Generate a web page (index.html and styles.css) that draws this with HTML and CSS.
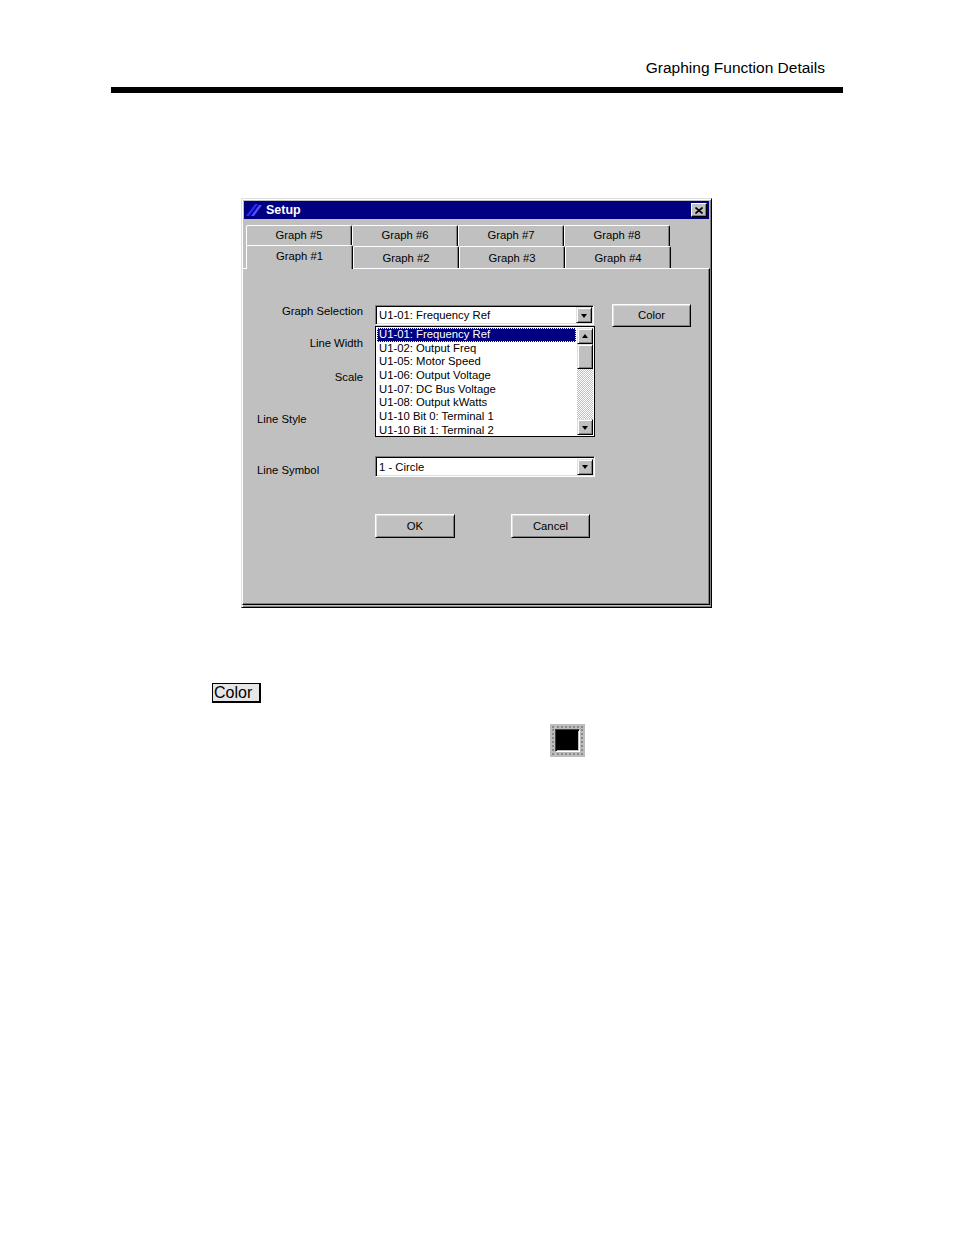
FILE: index.html
```html
<!DOCTYPE html>
<html>
<head>
<meta charset="utf-8">
<link rel="stylesheet" href="styles.css">
</head>
<body>
<div class="page">
  <div class="header">Graphing Function Details</div>
  <div class="rule"></div>

  <div class="dialog">
    <div class="titlebar">
      <svg class="ticon" width="16" height="14" viewBox="0 0 16 14">
        <polygon points="0,13 3,13 12,1 9,1" fill="#2a2aff"/>
        <polygon points="5,13 8,13 16,2 13,2" fill="#4f4fff"/>
      </svg>
      <span class="ttext">Setup</span>
      <span class="close">
        <svg width="8" height="7" viewBox="0 0 8 7"><path d="M0.5 0.5 L7.5 6.5 M7.5 0.5 L0.5 6.5" stroke="#000" stroke-width="1.6"/></svg>
      </span>
    </div>

    <div class="tabs">
      <div class="tabrow back">
        <div class="tab">Graph #5</div>
        <div class="tab">Graph #6</div>
        <div class="tab">Graph #7</div>
        <div class="tab">Graph #8</div>
      </div>
      <div class="tabrow front">
        <div class="tab sel">Graph #1</div>
        <div class="tab">Graph #2</div>
        <div class="tab">Graph #3</div>
        <div class="tab">Graph #4</div>
      </div>
    </div>

    <div class="panel">
      <div class="row r1">
        <div class="lbl right">Graph Selection</div>
        <div class="combowrap">
          <div class="combo c1">
            <span class="ctext">U1-01: Frequency Ref</span>
            <span class="arrowbtn"><span class="tri down"></span></span>
          </div>
          <div class="droplist">
            <div class="item hl">U1-01: Frequency Ref</div>
            <div class="item">U1-02: Output Freq</div>
            <div class="item">U1-05: Motor Speed</div>
            <div class="item">U1-06: Output Voltage</div>
            <div class="item">U1-07: DC Bus Voltage</div>
            <div class="item">U1-08: Output kWatts</div>
            <div class="item">U1-10 Bit 0: Terminal 1</div>
            <div class="item">U1-10 Bit 1: Terminal 2</div>
            <div class="scrollbar">
              <span class="arrowbtn sb"><span class="tri up"></span></span>
              <span class="thumb"></span>
              <span class="track"></span>
              <span class="arrowbtn sb"><span class="tri down"></span></span>
            </div>
          </div>
        </div>
        <div class="btn colorbtn">Color</div>
      </div>
      <div class="row r2"><div class="lbl right">Line Width</div></div>
      <div class="row r3"><div class="lbl right">Scale</div></div>
      <div class="row r4"><div class="lbl">Line Style</div></div>
      <div class="row r5">
        <div class="lbl sym">Line Symbol</div>
        <div class="combo c2">
          <span class="ctext">1 - Circle</span>
          <span class="arrowbtn"><span class="tri down"></span></span>
        </div>
      </div>
      <div class="row r6">
        <div class="btn ok">OK</div>
        <div class="btn cancel">Cancel</div>
      </div>
    </div>
  </div>

  <div class="colorref">Color</div>

  <div class="swatch">
    <div class="swring">
      <div class="swbox"><div class="swfill"></div></div>
    </div>
  </div>
</div>
</body>
</html>
```

FILE: styles.css
```css
html, body {
  margin: 0;
  padding: 0;
  background: #fff;
}
.page {
  width: 954px;
  height: 1235px;
  position: relative;
  font-family: "Liberation Sans", Arial, sans-serif;
}
.header {
  padding-top: 59px;
  padding-right: 129px;
  text-align: right;
  font-size: 15.5px;
  line-height: 18px;
  color: #000;
}
.rule {
  margin-top: 10px;
  margin-left: 111px;
  width: 732px;
  height: 6px;
  background: #000;
}

/* dialog */
.dialog {
  margin-top: 105px;
  margin-left: 241px;
  width: 471px;
  height: 410px;
  box-sizing: border-box;
  background: #c0c0c0;
  border: 1px solid;
  border-color: #dfdfdf #000 #000 #dfdfdf;
  box-shadow: inset 1px 1px #fff, inset -1px -1px #808080;
  padding: 2px;
  display: flex;
  flex-direction: column;
  font-size: 11.3px;
  color: #000;
}
.titlebar {
  height: 18px;
  background: #000080;
  display: flex;
  align-items: center;
  flex-shrink: 0;
}
.ticon {
  margin-left: 2px;
  flex-shrink: 0;
}
.ttext {
  margin-left: 4px;
  color: #fff;
  font-weight: bold;
  font-size: 12.5px;
  line-height: 18px;
  flex: 1;
}
.close {
  width: 16px;
  height: 14px;
  box-sizing: border-box;
  margin-right: 2px;
  background: #c0c0c0;
  border: 1px solid;
  border-color: #fff #000 #000 #fff;
  box-shadow: inset -1px -1px #808080;
  display: flex;
  align-items: center;
  justify-content: center;
}

/* tabs */
.tabs {
  margin-top: 6px;
  padding-left: 2px;
  flex-shrink: 0;
}
.tabrow {
  display: flex;
}
.tabrow.back { height: 21px; }
.tabrow.front { height: 22px; }
.tab {
  width: 106px;
  box-sizing: border-box;
  border-top: 1px solid #fff;
  border-left: 1px solid #fff;
  border-right: 1px solid #000;
  box-shadow: inset -1px 0 #808080;
  border-radius: 2px 2px 0 0;
  text-align: center;
  background: #c0c0c0;
}
.back .tab { height: 21px; line-height: 19px; }
.front .tab { height: 22px; line-height: 23px; }
.front .tab.sel {
  position: relative;
  z-index: 2;
  height: 24px;
  margin-top: -1px;
  line-height: 21px;
  width: 107px;
}

/* panel */
.panel {
  flex: 1;
  box-sizing: border-box;
  margin-left: -2px;
  margin-right: -1px;
  margin-bottom: 0;
  border-top: 1px solid #fff;
  border-left: 1px solid #fff;
  border-right: 1px solid #000;
  border-bottom: 1px solid #000;
  box-shadow: inset -1px -1px #808080;
  padding-top: 35px;
  padding-left: 14px;
  position: relative;
  z-index: 1;
}
.row {
  display: flex;
  align-items: flex-start;
}
.lbl {
  width: 106px;
  line-height: 13px;
  white-space: nowrap;
  flex-shrink: 0;
}
.lbl.right { text-align: right; }
.r1 { height: 23px; }
.r1 .lbl { padding-top: 1px; }
.r2 { margin-top: 10px; height: 13px; }
.r3 { margin-top: 21px; height: 13px; }
.r4 { margin-top: 29px; height: 13px; }
.r5 { margin-top: 30px; height: 21px; }
.r5 .lbl { padding-top: 8px; }
.r6 { margin-top: 37px; padding-left: 118px; height: 24px; }

.combowrap {
  margin-left: 12px;
  margin-top: 1px;
  width: 220px;
  position: relative;
  z-index: 3;
}
.combo {
  height: 20px;
  box-sizing: border-box;
  background: #fff;
  border: 1px solid;
  border-color: #808080 #fff #fff #808080;
  box-shadow: inset 1px 1px #000, inset -1px -1px #dfdfdf;
  display: flex;
  align-items: center;
  justify-content: space-between;
  padding: 1px 1px 1px 3px;
}
.combo.c1 { width: 219px; }
.combo.c2 { width: 220px; height: 21px; margin-left: 12px; }
.ctext {
  line-height: 14px;
  white-space: nowrap;
}
.arrowbtn {
  width: 16px;
  height: 16px;
  box-sizing: border-box;
  background: #c0c0c0;
  border: 1px solid;
  border-color: #dfdfdf #000 #000 #dfdfdf;
  box-shadow: inset 1px 1px #fff, inset -1px -1px #808080;
  display: flex;
  align-items: center;
  justify-content: center;
  flex-shrink: 0;
}
.tri {
  width: 0;
  height: 0;
  border-left: 3.5px solid transparent;
  border-right: 3.5px solid transparent;
}
.tri.down { border-top: 4px solid #000; margin-top: 1px; }
.tri.up { border-bottom: 4px solid #000; margin-bottom: 1px; }

.droplist {
  position: absolute;
  top: 21px;
  left: 0;
  width: 220px;
  height: 111px;
  box-sizing: border-box;
  border: 1px solid #000;
  background: #fff;
  padding: 1px;
}
.item {
  width: 199px;
  box-sizing: border-box;
  height: 13.7px;
  line-height: 13.7px;
  padding-left: 2px;
  white-space: nowrap;
  overflow: hidden;
}
.item.hl {
  background: #000080;
  color: #fff;
  outline: 1px dotted #ffff80;
  outline-offset: -1px;
}
.scrollbar {
  position: absolute;
  top: 1px;
  right: 1px;
  bottom: 1px;
  width: 16px;
  display: flex;
  flex-direction: column;
}
.thumb {
  height: 25px;
  box-sizing: border-box;
  background: #c0c0c0;
  border: 1px solid;
  border-color: #dfdfdf #000 #000 #dfdfdf;
  box-shadow: inset 1px 1px #fff, inset -1px -1px #808080;
}
.track {
  flex: 1;
  background: repeating-conic-gradient(#c0c0c0 0 25%, #fff 0 50%) 0 0 / 2px 2px;
}

.btn {
  box-sizing: border-box;
  background: #c0c0c0;
  border: 1px solid;
  border-color: #fff #000 #000 #fff;
  box-shadow: inset 1px 1px #dfdfdf, inset -1px -1px #808080;
  text-align: center;
}
.colorbtn {
  width: 79px;
  height: 23px;
  line-height: 21px;
  margin-left: 17px;
  margin-top: 0;
}
.ok { width: 80px; height: 24px; line-height: 22px; }
.cancel { width: 79px; height: 24px; line-height: 22px; margin-left: 56px; }

/* below dialog */
.colorref {
  margin-top: 75px;
  margin-left: 212px;
  width: 49px;
  height: 20px;
  box-sizing: border-box;
  border: 1px solid #000;
  border-right-width: 2px;
  border-bottom-width: 2px;
  background: #e6e6e6;
  font-size: 16px;
  line-height: 17px;
  padding-left: 1px;
  color: #000;
}
.swatch {
  margin-top: 21px;
  margin-left: 550px;
  width: 35px;
  height: 33px;
  box-sizing: border-box;
  background: #bdbdbd;
  padding: 2px;
}
.swring {
  width: 100%;
  height: 100%;
  box-sizing: border-box;
  border: 2px dotted #8a8a8a;
  padding: 1px;
}
.swbox {
  width: 100%;
  height: 100%;
  box-sizing: border-box;
  border: 1px solid;
  border-color: #404040 #fff #fff #404040;
  box-shadow: inset 1px 1px #000, inset -1px -1px #c0c0c0;
  padding: 2px;
  background: #000;
}
.swfill {
  width: 100%;
  height: 100%;
  background: #000;
}
```
